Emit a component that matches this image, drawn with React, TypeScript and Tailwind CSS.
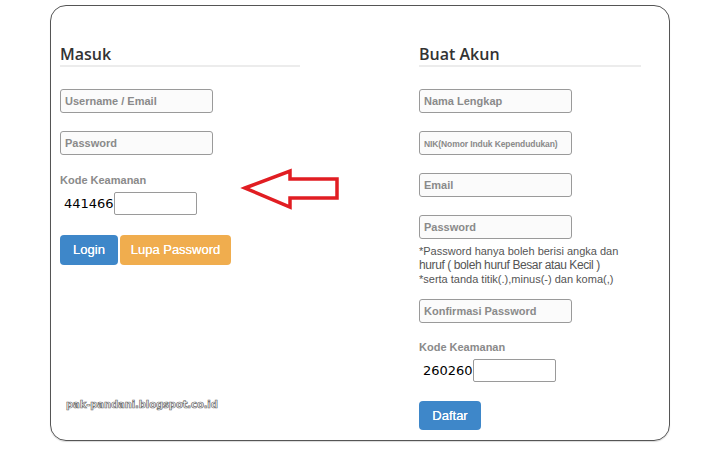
import React from 'react';

const inputCls =
  'h-[24px] w-[153px] rounded-[3px] border border-[#9a9a9a] bg-[#fbfbfb] px-[4px] text-[11px] font-bold text-[#555] placeholder:text-[#8a8a8a] outline-none';

function Heading({ title, width }: { title: string; width: string }) {
  return (
    <div className={`${width} border-b-2 border-[#ececec] pb-[1px]`}>
      <h2 className="h-[20px] text-[16px] leading-[20px] font-semibold text-[#333] [font-family:'Open_Sans',sans-serif]">
        {title}
      </h2>
    </div>
  );
}

function Field({ placeholder, className = '', small = false }: { placeholder: string; className?: string; small?: boolean }) {
  return (
    <input
      placeholder={placeholder}
      className={`${inputCls} ${small ? 'px-[3px] placeholder:text-[8.5px] placeholder:tracking-[-0.1px]' : ''} ${className}`}
    />
  );
}

function Captcha({ code }: { code: string }) {
  return (
    <>
      <div className="text-[11px] leading-[14px] font-bold text-[#8a8a8a]">Kode Keamanan</div>
      <div className="mt-[5px] flex items-center">
        <span className="w-[54px] pl-[4px] text-[13px] text-black [font-family:'DejaVu_Sans',sans-serif]">{code}</span>
        <input className="h-[23px] w-[83px] rounded-[2px] border border-[#9a9a9a] bg-white outline-none" />
      </div>
    </>
  );
}

export default function App() {
  return (
    <div className="relative h-[457px] w-[721px] bg-white pt-[5px] pl-[50px] [font-family:'Liberation_Sans',Arial,sans-serif]">
      <div className="flex h-[436px] w-[620px] rounded-[16px] border-[1.5px] border-[#555] pt-[38px] shadow-[0_1px_1px_rgba(0,0,0,0.15)]">
        {/* Masuk */}
        <div className="flex w-[368px] flex-col pl-[9px]">
          <Heading title="Masuk" width="w-[240px]" />
          <Field placeholder="Username / Email" className="mt-[22px]" />
          <Field placeholder="Password" className="mt-[18px]" />
          <div className="mt-[18px]">
            <Captcha code="441466" />
          </div>
          <div className="mt-[20px] flex gap-[2px]">
            <button className="h-[30px] w-[58px] rounded-[4px] bg-[#3e87c9] text-[13px] text-white [text-shadow:0_0_0.4px_#fff]">Login</button>
            <button className="h-[30px] w-[111px] rounded-[4px] bg-[#f0ad4e] text-[13px] text-white [text-shadow:0_0_0.4px_#fff]">Lupa Password</button>
          </div>
          <div className="mt-[133px] pl-[6px] text-[10px] leading-[14px] font-bold tracking-[-0.1px] text-white [font-family:'DejaVu_Sans',sans-serif] [-webkit-text-stroke:0.7px_#6a6a6a]">
            pak-pandani.blogspot.co.id
          </div>
        </div>

        {/* Buat Akun */}
        <div className="flex w-[230px] flex-col">
          <Heading title="Buat Akun" width="w-[222px]" />
          <Field placeholder="Nama Lengkap" className="mt-[22px]" />
          <Field placeholder="NIK(Nomor Induk Kependudukan)" small className="mt-[18px]" />
          <Field placeholder="Email" className="mt-[18px]" />
          <Field placeholder="Password" className="mt-[18px]" />
          <div className="mt-[5px] text-[11px] leading-[14px] text-[#555]">
            <div>*Password hanya boleh berisi angka dan</div>
            <div className="text-[12px] tracking-[-0.4px]">huruf ( boleh huruf Besar atau Kecil )</div>
            <div>*serta tanda titik(.),minus(-) dan koma(,)</div>
          </div>
          <Field placeholder="Konfirmasi Password" className="mt-[13px]" />
          <div className="mt-[17px]">
            <Captcha code="260260" />
          </div>
          <button className="mt-[19px] h-[29px] w-[62px] rounded-[4px] bg-[#3e87c9] text-[13px] text-white [text-shadow:0_0_0.4px_#fff]">Daftar</button>
        </div>
      </div>

      {/* red arrow annotation */}
      <svg className="absolute left-[240px] top-[165px]" width="102" height="48" viewBox="0 0 102 48">
        <polygon
          points="5,23 50,6 50,14 97,14 97,33 50,33 50,42"
          fill="none"
          stroke="#e11d22"
          strokeWidth="3.5"
          strokeLinejoin="miter"
        />
      </svg>
    </div>
  );
}
